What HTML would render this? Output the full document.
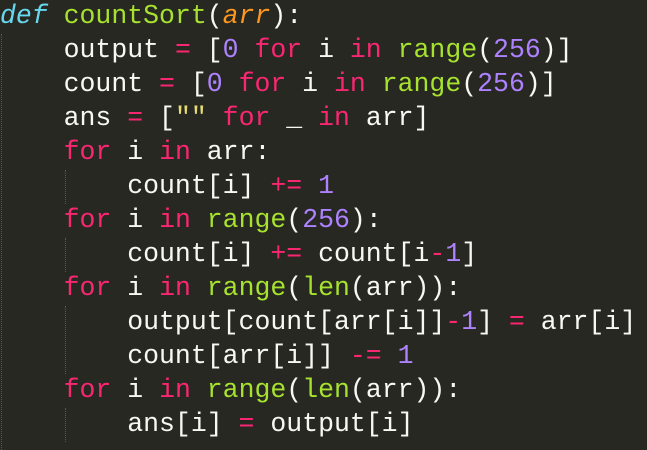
<!DOCTYPE html>
<html><head><meta charset="utf-8"><style>
html,body{margin:0;padding:0;background:#272822;width:647px;height:450px;overflow:hidden}
pre{margin:0;position:absolute;left:0;top:-1px;font-family:"Liberation Mono",monospace;font-size:26.5px;line-height:34px;color:#f8f8f2;white-space:pre}
.k{color:#f92672}.n{color:#ae81ff}.f{color:#a6e22e}.d{color:#66d9ef;font-style:italic}.a{color:#fd971f;font-style:italic}.s{color:#e6db74}
.g{position:absolute;width:0;border-left:1px dotted #5a5a50}
</style></head><body>
<div class="g" style="left:1px;top:34px;height:416px"></div>
<div class="g" style="left:65px;top:170px;height:34px"></div>
<div class="g" style="left:65px;top:238px;height:34px"></div>
<div class="g" style="left:65px;top:306px;height:68px"></div>
<div class="g" style="left:65px;top:408px;height:34px"></div>
<pre><span class="d">def</span> <span class="f">countSort</span>(<span class="a">arr</span>):
    output <span class="k">=</span> [<span class="n">0</span> <span class="k">for</span> i <span class="k">in</span> <span class="f">range</span>(<span class="n">256</span>)]
    count <span class="k">=</span> [<span class="n">0</span> <span class="k">for</span> i <span class="k">in</span> <span class="f">range</span>(<span class="n">256</span>)]
    ans <span class="k">=</span> [<span class="s">""</span> <span class="k">for</span> _ <span class="k">in</span> arr]
    <span class="k">for</span> i <span class="k">in</span> arr:
        count[i] <span class="k">+=</span> <span class="n">1</span>
    <span class="k">for</span> i <span class="k">in</span> <span class="f">range</span>(<span class="n">256</span>):
        count[i] <span class="k">+=</span> count[i<span class="k">-</span><span class="n">1</span>]
    <span class="k">for</span> i <span class="k">in</span> <span class="f">range</span>(<span class="f">len</span>(arr)):
        output[count[arr[i]]<span class="k">-</span><span class="n">1</span>] <span class="k">=</span> arr[i]
        count[arr[i]] <span class="k">-=</span> <span class="n">1</span>
    <span class="k">for</span> i <span class="k">in</span> <span class="f">range</span>(<span class="f">len</span>(arr)):
        ans[i] <span class="k">=</span> output[i]</pre>
</body></html>
